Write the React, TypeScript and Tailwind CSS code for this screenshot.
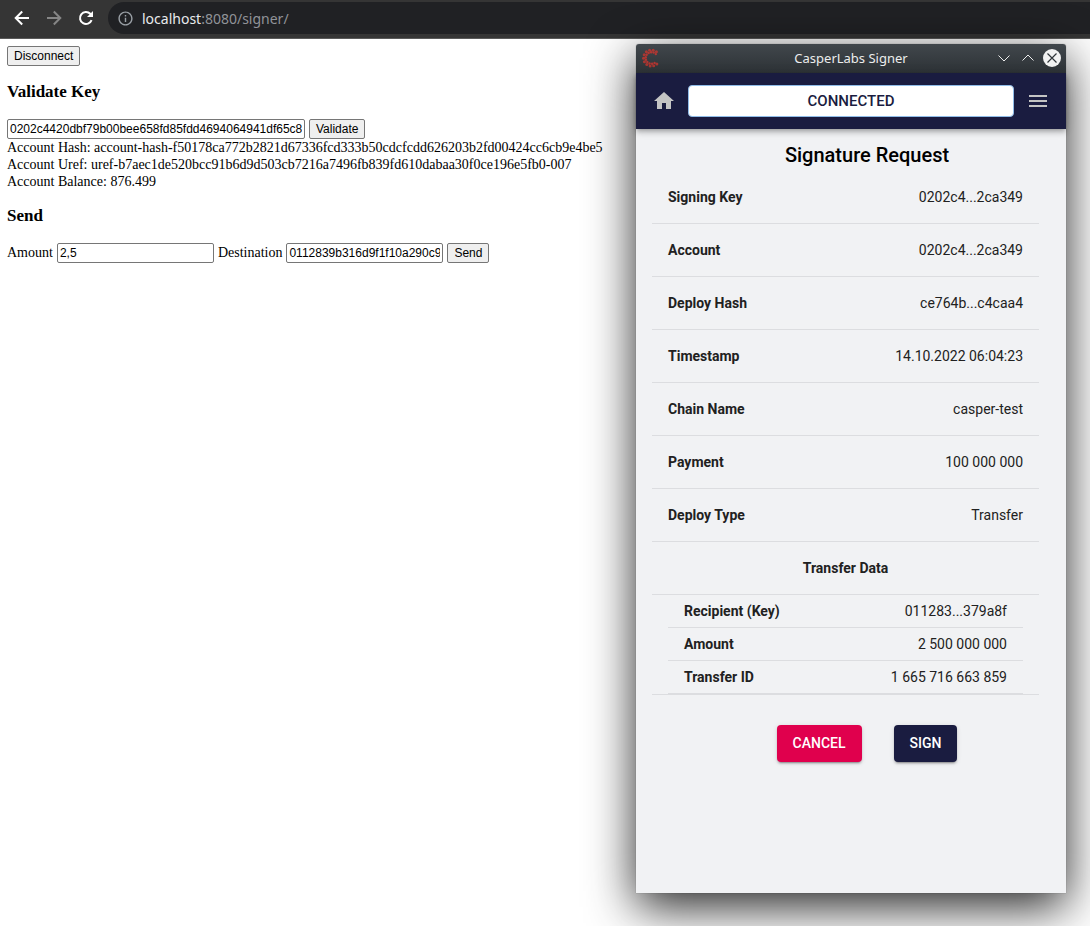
import type { ReactNode } from "react";
import { MdHome, MdInfoOutline, MdMenu } from "react-icons/md";

const details = [
  ["Signing Key", "0202c4...2ca349"],
  ["Account", "0202c4...2ca349"],
  ["Deploy Hash", "ce764b...c4caa4"],
  ["Timestamp", "14.10.2022 06:04:23"],
  ["Chain Name", "casper-test"],
  ["Payment", "100 000 000"],
  ["Deploy Type", "Transfer"],
];

const transfer = [
  ["Recipient (Key)", "011283...379a8f"],
  ["Amount", "2 500 000 000"],
  ["Transfer ID", "1 665 716 663 859"],
];

function BarIcon({ children }: { children: ReactNode }) {
  return (
    <svg viewBox="0 0 20 20" className="size-5" fill="none" stroke="currentColor" strokeWidth="2" aria-hidden="true">
      {children}
    </svg>
  );
}

function BrowserBar() {
  return (
    <header className="flex h-[39px] items-center border-b border-[#5a5a5a] bg-[#353535] pb-[2px] pl-3">
      <button aria-label="Back" className="text-white">
        <BarIcon><path d="M17 10H4.200M10.200 3.500 3.700 10l6.500 6.500" /></BarIcon>
      </button>
      <button aria-label="Forward" className="ml-3 text-[#868686]">
        <BarIcon><path d="M3 10h12.800M9.800 3.500l6.500 6.500-6.500 6.500" /></BarIcon>
      </button>
      <button aria-label="Reload" className="ml-3 text-white">
        <BarIcon>
          <path d="M15.600 12.200A6 6 0 1 1 14.300 5.800L16 7.500" />
          <path d="M17 3v6h-6z" fill="currentColor" stroke="none" />
        </BarIcon>
      </button>
      <div className="ml-3 flex h-8 grow items-center gap-2 rounded-l-full bg-[#202124] pl-[9px]">
        <MdInfoOutline className="size-[17px] text-[#9aa0a6]" />
        <span className="font-['Noto_Sans',sans-serif] text-[14px] text-[#909398]">
          <span className="text-[#e8eaed]">localhost</span>:8080/signer/
        </span>
      </div>
    </header>
  );
}

function PlainButton({ children }: { children: ReactNode }) {
  return (
    <button className="h-5 rounded-[2px] border border-[#767676] bg-[#efefef] px-[6px] font-['Liberation_Sans',sans-serif] text-[12px] leading-[14px] text-black">
      {children}
    </button>
  );
}

const inputClass =
  "h-5 rounded-[2px] border border-[#767676] bg-white px-[2px] font-['Liberation_Sans',sans-serif] text-[12px] text-black";

function SignerPage() {
  return (
    <main className="px-[7px] pt-[7px] font-['Liberation_Serif',serif] text-[14px] leading-[17px] text-black">
      <PlainButton>Disconnect</PlainButton>
      <h3 className="mt-4 text-[17px] leading-5 font-bold">Validate Key</h3>
      <div className="mt-[17px] flex items-baseline gap-1">
        <input aria-label="Public key" className={`${inputClass} w-[298px]`} defaultValue="0202c4420dbf79b00bee658fd85fdd4694064941df65c8" />
        <PlainButton>Validate</PlainButton>
      </div>
      <p>Account Hash: account-hash-f50178ca772b2821d67336fcd333b50cdcfcdd626203b2fd00424cc6cb9e4be5</p>
      <p>Account Uref: uref-b7aec1de520bcc91b6d9d503cb7216a7496fb839fd610dabaa30f0ce196e5fb0-007</p>
      <p>Account Balance: 876.499</p>
      <h3 className="mt-4 text-[17px] leading-5 font-bold">Send</h3>
      <div className="mt-[17px] flex items-baseline gap-1">
        <label htmlFor="amount">Amount</label>
        <input id="amount" className={`${inputClass} w-[157px]`} defaultValue="2,5" />
        <label htmlFor="destination">Destination</label>
        <input id="destination" className={`${inputClass} w-[157px]`} defaultValue="0112839b316d9f1f10a290c9" />
        <PlainButton>Send</PlainButton>
      </div>
    </main>
  );
}

const logoAngles = [48, 74, 100, 126, 152, 178, 204, 230, 256, 282, 308];

function ringPoint(angle: number, radius: number) {
  const radians = (angle * Math.PI) / 180;
  return { cx: 10.5 + radius * Math.cos(radians), cy: 10 + radius * Math.sin(radians) };
}

function CasperLogo() {
  return (
    <svg viewBox="0 0 20 20" className="size-5" fill="#cf352e" aria-hidden="true">
      {logoAngles.map((angle) => (
        <g key={angle}>
          <circle {...ringPoint(angle, 8)} r="1.500" opacity="0.75" />
          <circle {...ringPoint(angle + 10, 5.8)} r="1.200" opacity="0.8" />
        </g>
      ))}
    </svg>
  );
}

function TitleBar() {
  return (
    <div className="grid h-[29px] grid-cols-[1fr_auto_1fr] items-center rounded-t-[3px] bg-linear-to-b from-[#41474c] to-[#2d3236] px-[5px] pb-[2px]">
      <CasperLogo />
      <span className="font-['Noto_Sans',sans-serif] text-[13px] text-[#eceded]">CasperLabs Signer</span>
      <div className="flex items-center justify-end gap-[6px] text-[#eceded]">
        <button aria-label="Minimize">
          <svg viewBox="0 0 18 18" className="size-[18px]" fill="none" stroke="currentColor"><path d="M3.500 6.500 9 12l5.500-5.500" /></svg>
        </button>
        <button aria-label="Maximize">
          <svg viewBox="0 0 18 18" className="size-[18px]" fill="none" stroke="currentColor"><path d="M3.500 11.500 9 6l5.500 5.500" /></svg>
        </button>
        <button aria-label="Close">
          <svg viewBox="0 0 18 18" className="size-[18px]" fill="none">
            <circle cx="9" cy="9" r="9" fill="#f2f2f2" />
            <path d="m4.500 4.500 9 9m0-9-9 9" stroke="#30363a" strokeWidth="1.200" />
          </svg>
        </button>
      </div>
    </div>
  );
}

function SignerWindow() {
  return (
    <section
      aria-label="CasperLabs Signer"
      className="absolute top-11 right-6 bottom-[33px] flex w-[430px] flex-col rounded-t-[3px] bg-[#f1f2f4] font-[Roboto,sans-serif] text-[14px] leading-5 text-[#212121] shadow-[0_0_1px_rgba(0,0,0,0.5),0_14px_48px_rgba(0,0,0,0.85)]"
    >
      <TitleBar />
      <nav className="flex h-14 items-center bg-[#1a1c40] px-4 text-[#c4c4c4] shadow-[0_2px_4px_-1px_rgba(0,0,0,0.2),0_4px_5px_rgba(0,0,0,0.14),0_1px_10px_rgba(0,0,0,0.12)]">
        <button aria-label="Home"><MdHome className="size-6" /></button>
        <button className="mx-3 h-8 grow rounded-[4px] border border-[#90bce8] bg-white text-[15px] font-medium text-[#1a1c40]">
          CONNECTED
        </button>
        <button aria-label="Menu"><MdMenu className="size-6" /></button>
      </nav>
      <h1 className="mt-[10px] pl-8 text-center text-[20px] leading-8 font-medium text-black">Signature Request</h1>
      <div className="pr-[27px] pl-4">
        <table className="w-full border-separate border-spacing-0">
          <tbody>
            {details.map(([name, value]) => (
              <tr key={name}>
                <th scope="row" className="border-b border-[#dcdde0] p-4 text-left font-bold">{name}</th>
                <td className="border-b border-[#dcdde0] p-4 text-right">{value}</td>
              </tr>
            ))}
            <tr>
              <th colSpan={2} className="border-b border-[#dcdde0] p-4 text-center font-bold">Transfer Data</th>
            </tr>
            <tr>
              <td colSpan={2} className="border-b border-[#dcdde0] px-4">
                <table className="w-full border-separate border-spacing-0">
                  <tbody>
                    {transfer.map(([name, value]) => (
                      <tr key={name}>
                        <th scope="row" className="border-b border-[#dcdde0] px-4 py-[6px] text-left font-bold">{name}</th>
                        <td className="border-b border-[#dcdde0] px-4 py-[6px] text-right">{value}</td>
                      </tr>
                    ))}
                  </tbody>
                </table>
              </td>
            </tr>
          </tbody>
        </table>
      </div>
      <div className="mt-[30px] flex justify-center gap-8 pl-8 font-medium text-white">
        <button className="rounded-[4px] bg-[#e0004d] px-4 py-2 leading-[21px] shadow-[0_3px_1px_-2px_rgba(0,0,0,0.2),0_2px_2px_rgba(0,0,0,0.14),0_1px_5px_rgba(0,0,0,0.12)]">
          CANCEL
        </button>
        <button className="rounded-[4px] bg-[#1a1c40] px-4 py-2 leading-[21px] shadow-[0_3px_1px_-2px_rgba(0,0,0,0.2),0_2px_2px_rgba(0,0,0,0.14),0_1px_5px_rgba(0,0,0,0.12)]">
          SIGN
        </button>
      </div>
    </section>
  );
}

export default function App() {
  return (
    <div className="relative min-h-screen overflow-hidden bg-white">
      <BrowserBar />
      <SignerPage />
      <SignerWindow />
    </div>
  );
}
